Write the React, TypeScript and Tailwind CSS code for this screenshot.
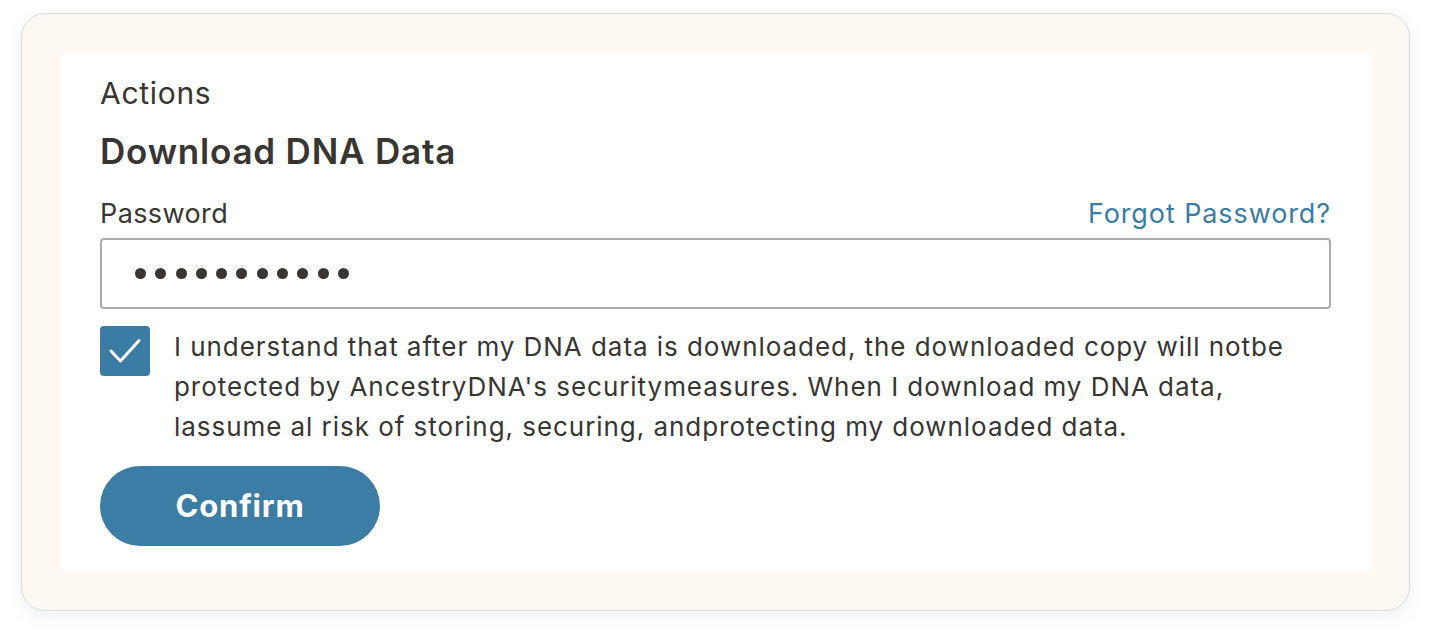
export default function App() {
  return (
    <div className="min-h-screen bg-white pt-[13px] pl-[21px] font-['Inter','Noto_Sans',sans-serif] text-[#383532]">
      <div className="w-[1389px] rounded-[24px] border border-[#d9dde4] bg-[#fdf8f1] p-[38px] shadow-[0_6px_16px_rgba(160,170,190,0.18)]">
        <div className="rounded-[6px] bg-white px-[40px] pt-[21px] pb-[26px]">
          <div className="text-[30px] leading-[40px] tracking-[0.7px]">Actions</div>
          <h2 className="mt-[16px] text-[35px] font-semibold leading-[44px] tracking-[0.8px]">Download DNA Data</h2>
          <div className="mt-[23px] flex items-center justify-between leading-[36px]">
            <label className="text-[27px] tracking-[0.4px]">Password</label>
            <a className="text-[27px] tracking-[0.9px] text-[#3b7ca4]">Forgot Password?</a>
          </div>
          <div className="mt-[6px] flex h-[71px] items-center rounded-[4px] border-2 border-[#ababae] px-[33px]">
            <div className="flex gap-[9.3px]">
              {Array.from({ length: 11 }).map((_, i) => (
                <span key={i} className="h-[11px] w-[11px] rounded-full bg-[#383532]" />
              ))}
            </div>
          </div>
          <div className="mt-[17px] flex gap-[24px]">
            <div className="flex h-[50px] w-[50px] shrink-0 items-center justify-center rounded-[4px] bg-[#3b7ca4]">
              <svg width="34" height="28" viewBox="0 0 34 28" fill="none">
                <path d="M3 14 L12.5 24 L31 3.5" stroke="white" strokeWidth="3" strokeLinecap="round" strokeLinejoin="round" />
              </svg>
            </div>
            <p className="mt-[1px] text-[26px] leading-[40px] tracking-[0.95px]">
              I understand that after my DNA data is downloaded, the downloaded copy will notbe<br />
              protected by AncestryDNA's securitymeasures. When I download my DNA data,<br />
              lassume al risk of storing, securing, andprotecting my downloaded data.
            </p>
          </div>
          <button className="mt-[19px] flex h-[80px] w-[280px] items-center justify-center rounded-full bg-[#3c7da5] text-[31px] font-bold tracking-[0.8px] text-white">
            Confirm
          </button>
        </div>
      </div>
    </div>
  )
}
